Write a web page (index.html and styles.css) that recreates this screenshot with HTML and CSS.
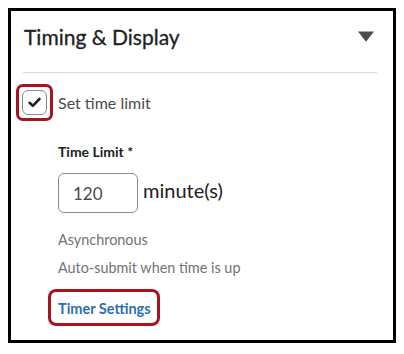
FILE: index.html
```html
<!DOCTYPE html>
<html lang="en">
<head>
  <meta charset="UTF-8" />
  <title>Timing &amp; Display</title>
  <link rel="stylesheet" href="styles.css">
</head>
<body>

  <section class="panel">
    <header class="panel-header">
      <h2>Timing &amp; Display</h2>
      <svg class="caret" width="18" height="12" viewBox="0 0 18 12">
        <path d="M1 1.5 L17 1.5 L9.6 11 Q9 11.6 8.4 11 Z" fill="#494c4e"/>
      </svg>
    </header>

    <div class="check-row">
      <span class="highlight box-check">
        <span class="checkbox">
          <svg width="13" height="11" viewBox="0 0 13 11">
            <path d="M1.6 5.8 L4.8 8.8 L11.4 2" fill="none" stroke="#202122" stroke-width="2.6" stroke-linecap="round" stroke-linejoin="round"/>
          </svg>
        </span>
      </span>
      <span class="check-label">Set time limit</span>
    </div>

    <div class="limit">
      <div class="field-label">Time Limit *</div>
      <div class="limit-input">
        <input type="text" value="120">
        <span class="unit">minute(s)</span>
      </div>
      <p class="note">Asynchronous</p>
      <p class="note">Auto-submit when time is up</p>
      <a class="highlight timer-link" href="#">Timer Settings</a>
    </div>
  </section>

</body>
</html>
```

FILE: styles.css
```css
body {
  font-family: Lato, 'Liberation Sans', sans-serif;
  margin: 8px;
  background: #fff;
  color: #202122;
}
.panel {
  box-sizing: border-box;
  width: 388px;
  height: 335px;
  border: 3px solid #000;
  background: #fff;
}
.panel-header {
  display: flex;
  justify-content: space-between;
  align-items: center;
  margin: 0 16px 0 12px;
  padding: 13px 2px 23px 1px;
  border-bottom: 1px solid #d6dadf;
}
.panel-header h2 {
  margin: 0;
  font-size: 21px;
  font-weight: 400;
  line-height: 25px;
  color: #202122;
  -webkit-text-stroke: 0.3px #202122;
}
.caret {
  display: block;
  margin-top: -1px;
}
.highlight {
  border: 3px solid #a8131f;
  border-radius: 7px;
}
.check-row {
  display: flex;
  align-items: center;
  margin: 11px 0 0 5px;
}
.box-check {
  display: flex;
  padding: 3px;
}
.checkbox {
  box-sizing: border-box;
  width: 25px;
  height: 25px;
  border: 1.5px solid #868c8f;
  border-radius: 6px;
  display: flex;
  align-items: center;
  justify-content: center;
}
.check-label {
  margin-left: 5px;
  font-size: 16px;
  color: #494c4e;
}
.limit {
  padding-left: 47px;
}
.field-label {
  margin-top: 22px;
  font-size: 14px;
  font-weight: 700;
  line-height: 17px;
}
.limit-input {
  display: flex;
  align-items: center;
  margin-top: 13px;
}
.limit-input input {
  box-sizing: border-box;
  width: 80px;
  height: 40px;
  padding: 0 0 0 14px;
  border: 1px solid #868c8f;
  border-radius: 6px;
  font-family: inherit;
  font-size: 17px;
  color: #494c4e;
}
.unit {
  margin: 0 0 6px 5px;
  font-size: 20px;
}
.note {
  margin: 11px 0 0;
  font-size: 14.4px;
  line-height: 17px;
  color: #6e7477;
}
.note:first-of-type {
  margin-top: 18px;
}
.timer-link {
  display: inline-block;
  margin: 13px 0 0 -10px;
  padding: 8px 6px 6px 7px;
  font-size: 14.5px;
  font-weight: 700;
  line-height: 17px;
  color: #2a6db5;
  text-decoration: none;
  border-radius: 8px;
}
```
